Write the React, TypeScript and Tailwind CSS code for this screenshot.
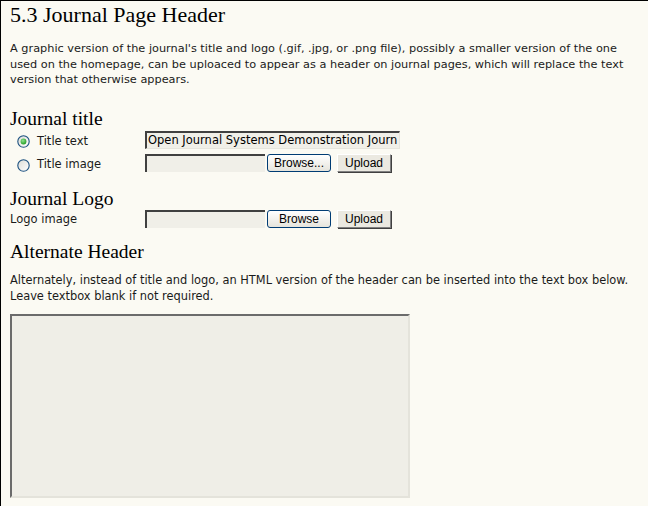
import React from "react";

const verdana = { fontFamily: '"DejaVu Sans", Verdana, sans-serif' };

function Radio({ checked }: { checked?: boolean }) {
  return (
    <svg width="13" height="13" viewBox="0 0 13 13" className="shrink-0">
      <defs>
        <linearGradient id={checked ? "rg1" : "rg2"} x1="0" y1="0" x2="1" y2="1">
          <stop offset="0" stopColor="#dcdcd6" />
          <stop offset="1" stopColor="#ffffff" />
        </linearGradient>
        <radialGradient id="dot" cx="0.4" cy="0.35" r="0.7">
          <stop offset="0" stopColor="#8ee28e" />
          <stop offset="1" stopColor="#1e9a1e" />
        </radialGradient>
      </defs>
      <circle cx="6.5" cy="6.5" r="5.7" fill={`url(#${checked ? "rg1" : "rg2"})`} stroke="#1c5180" strokeWidth="1.1" />
      {checked && <circle cx="6.5" cy="6.5" r="2.9" fill="url(#dot)" />}
    </svg>
  );
}

function BrowseBtn({ label }: { label: string }) {
  return (
    <div className="w-[64px] h-[18px] rounded-[3px] border border-[#003c74] bg-gradient-to-b from-white to-[#e6e4dc] flex items-center justify-center text-[12px] text-black leading-none font-['Liberation_Sans',Arial,sans-serif] overflow-hidden">
      {label}
    </div>
  );
}

function UploadBtn() {
  return (
    <div className="w-[54px] h-[18px] bg-[#ebe9e1] border border-t-white border-l-white border-b-[#808080] border-r-[#808080] shadow-[1px_1px_0_#404040] flex items-center justify-center text-[12px] text-black leading-none font-['Liberation_Sans',Arial,sans-serif] overflow-hidden">
      Upload
    </div>
  );
}

function FileInput() {
  return <div className="w-[120px] h-[18px] bg-[#f0efe8] border-t-2 border-l-2 border-t-[#404040] border-l-[#404040]" />;
}

export default function App() {
  return (
    <div className="min-h-[506px] w-full bg-[#fbfaf3] border-t border-l border-black pl-[9px] text-[#1a1a1a]">
      <h1 className="text-[22px] leading-[26px] pt-[1px] text-black font-['Liberation_Serif',Georgia,serif]">
        5.3 Journal Page Header
      </h1>
      <p className="mt-[13px] text-[11.3px] leading-[15.5px] pr-[12px]" style={verdana}>
        A graphic version of the journal's title and logo (.gif, .jpg, or .png file), possibly a smaller version of the one used on the homepage, can be uploaced to appear as a header on journal pages, which will replace the text version that otherwise appears.
      </p>

      <h2 className="mt-[21px] text-[19.5px] leading-[20px] text-black font-['Liberation_Serif',Georgia,serif]">Journal title</h2>
      <div className="mt-[2px] flex flex-col gap-[5px]">
        <div className="flex items-center h-[18px]">
          <div className="w-[135px] flex items-center gap-[7px] pl-[7px] text-[11.5px] pt-[4px]" style={verdana}>
            <Radio checked />
            <span>Title text</span>
          </div>
          <div className="w-[255px] h-[18px] bg-[#f0efe8] border-t-2 border-l-2 border-t-[#404040] border-l-[#404040] border-b border-r border-b-[#e6e5dd] border-r-[#e6e5dd] text-[11.5px] leading-[15px] pl-[1px] whitespace-nowrap overflow-hidden text-black" style={verdana}>
            Open Journal Systems Demonstration Journ
          </div>
        </div>
        <div className="flex items-center h-[18px]">
          <div className="w-[135px] flex items-center gap-[7px] pl-[7px] text-[11.5px] pt-[5px]" style={verdana}>
            <Radio />
            <span>Title image</span>
          </div>
          <FileInput />
          <div className="ml-[2px]"><BrowseBtn label="Browse..." /></div>
          <div className="ml-[6px]"><UploadBtn /></div>
        </div>
      </div>

      <h2 className="mt-[17px] text-[19.5px] leading-[20px] text-black font-['Liberation_Serif',Georgia,serif]">Journal Logo</h2>
      <div className="mt-[1px] flex items-center h-[18px]">
        <div className="w-[135px] text-[11.5px] h-[13px] leading-[13px] overflow-hidden self-start mt-[3px]" style={verdana}>
          Logo image
        </div>
        <FileInput />
        <div className="ml-[2px]"><BrowseBtn label="Browse" /></div>
        <div className="ml-[6px]"><UploadBtn /></div>
      </div>

      <h2 className="mt-[14px] text-[19.5px] leading-[20px] text-black font-['Liberation_Serif',Georgia,serif]">Alternate Header</h2>
      <p className="mt-[10px] text-[11.4px] leading-[16px] pr-[12px]" style={verdana}>
        Alternately, instead of title and logo, an HTML version of the header can be inserted into the text box below. Leave textbox blank if not required.
      </p>
      <div className="mt-[10px] w-[400px] h-[184px] bg-[#efeee7] border-2 border-t-[#6b6b6b] border-l-[#6b6b6b] border-b-[#e4e3db] border-r-[#e4e3db]" />
    </div>
  );
}
